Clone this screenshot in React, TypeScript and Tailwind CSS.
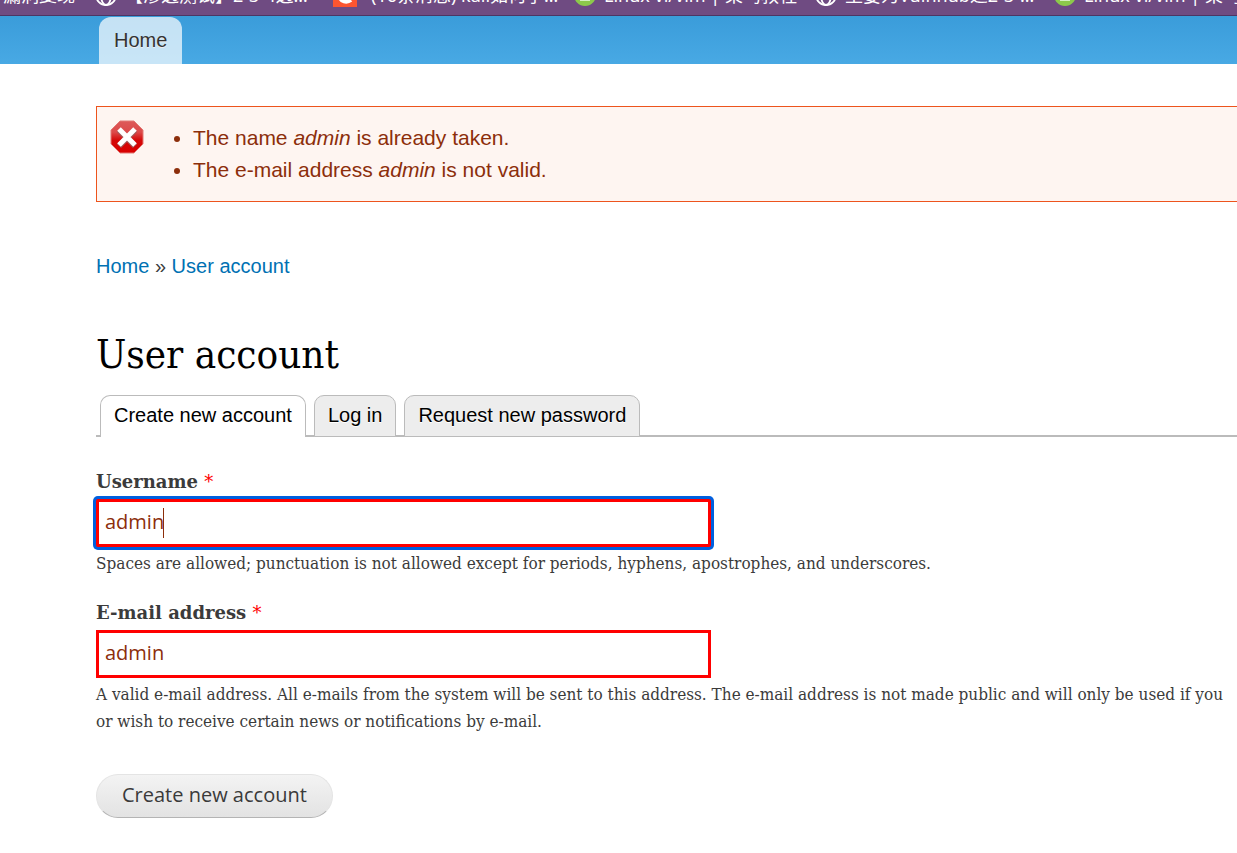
import type { ReactNode } from "react";

const sans = "font-['Liberation_Sans',Arial,sans-serif]";
const serif = "font-['DejaVu_Serif_Condensed','DejaVu_Serif',serif]";
const humanist = "font-['Open_Sans','Noto_Sans',sans-serif]";

function GlobeIcon() {
  return (
    <svg viewBox="0 0 22 22" className="h-[22px] w-[22px] shrink-0" fill="none" stroke="#fff" strokeWidth="1.8" aria-hidden="true">
      <circle cx="11" cy="11" r="10" />
      <ellipse cx="11" cy="11" rx="5" ry="10" />
      <path d="M2 7.500h18M2 14.500h18" />
    </svg>
  );
}

function CsdnIcon() {
  return (
    <svg viewBox="0 0 24 24" className="mr-1.5 h-6 w-6 shrink-0" aria-hidden="true">
      <rect width="24" height="24" fill="#fc5531" />
      <path d="M18 7c-5-3-11-1-11 6 0 6 7 7 11 4" fill="none" stroke="#fff" strokeWidth="4" />
    </svg>
  );
}

function RunoobIcon() {
  return (
    <svg viewBox="0 0 22 22" className="h-[22px] w-[22px] shrink-0" aria-hidden="true">
      <circle cx="11" cy="11" r="11" fill="#8cc84b" />
      <path d="M6 16h10" stroke="#d7efc0" strokeWidth="2" />
    </svg>
  );
}

function Bookmark({ icon, label, width }: { icon?: ReactNode; label: string; width: string }) {
  return (
    <a href="#" className={`flex h-6 shrink-0 items-center gap-2 ${width}`}>
      {icon}
      <span className="whitespace-nowrap">{label}</span>
    </a>
  );
}

function BookmarkBar() {
  return (
    <nav
      aria-label="Bookmarks"
      className="flex h-4 items-end overflow-hidden border-b border-[#4d3564] bg-[#6f4b82] pb-2 pl-[3px] font-['Noto_Sans','Noto_Sans_CJK_SC',sans-serif] text-lg leading-6 text-white"
    >
      <Bookmark label="漏洞复现" width="w-[92px]" />
      <Bookmark icon={<GlobeIcon />} label="【渗透测试】2-3-4透…" width="w-[238px]" />
      <Bookmark icon={<CsdnIcon />} label="(16条消息) kali如何学…" width="w-[241px]" />
      <Bookmark icon={<RunoobIcon />} label="Linux vi/vim | 菜鸟教程" width="w-[241px]" />
      <Bookmark icon={<GlobeIcon />} label="主要为Vulnhub之2-3-…" width="w-[239px]" />
      <Bookmark icon={<RunoobIcon />} label="Linux vi/vim | 菜鸟教程" width="w-[241px]" />
    </nav>
  );
}

function ErrorIcon() {
  return (
    <svg viewBox="0 0 34 34" className="h-[34px] w-[34px] shrink-0" aria-hidden="true">
      <defs>
        <linearGradient id="stop" x1="0" y1="0" x2="0" y2="1">
          <stop offset="0" stopColor="#dd5a5a" />
          <stop offset="0.35" stopColor="#dc4a4a" />
          <stop offset="0.6" stopColor="#d40808" />
          <stop offset="1" stopColor="#d90000" />
        </linearGradient>
      </defs>
      <path d="M10 1h14l9 9v14l-9 9H10l-9-9V10z" fill="url(#stop)" stroke="#e27a76" strokeWidth="1" />
      <path d="M9 10l16 16M25 10L9 26" stroke="#a05858" strokeWidth="6" />
      <path d="M9 9l16 16M25 9L9 25" stroke="#fff" strokeWidth="5" />
    </svg>
  );
}

function Field({ id, label, type, focused, children }: { id: string; label: string; type: string; focused?: boolean; children: ReactNode }) {
  return (
    <div className="flex flex-col items-start">
      <label htmlFor={id} className="pb-0.5 font-['DejaVu_Serif',serif] text-lg leading-[30px] font-bold text-[#3b3b3b]">
        {label} <span className="font-normal text-[#f00]">*</span>
      </label>
      <div className="relative w-full max-w-[615px]">
        <input
          id={id}
          type={type}
          defaultValue="admin"
          className={`block h-12 w-full border-[3px] border-[#f00] bg-white px-1.5 pb-1 text-xl text-[#8c2e0b] outline-none ${humanist} ${focused ? "rounded-xs ring-3 ring-[#0060df]" : ""}`}
        />
        {focused && <span className="absolute top-[9px] left-[67px] h-[30px] w-px bg-[#8c2e0b]" />}
      </div>
      <p className={`pt-[3px] text-[17px] leading-[27px] whitespace-nowrap ${serif}`}>{children}</p>
    </div>
  );
}

const tabs = ["Create new account", "Log in", "Request new password"];

export default function App() {
  return (
    <div className="min-h-screen overflow-hidden bg-white text-[#3b3b3b]">
      <BookmarkBar />
      <header className="flex h-12 items-end bg-linear-to-b from-[#3a9cda] to-[#48a9e4] pl-[99px]">
        <a href="#" className={`h-[47px] rounded-t-xl bg-white/70 px-[15px] text-xl leading-[46px] text-[#333] [text-shadow:0_1px_#eee] ${sans}`}>
          Home
        </a>
      </header>
      <main className="pt-[42px] pl-24">
        <section role="alert" className={`flex h-24 items-start border border-r-0 border-[#ed541d] bg-[#fef5f1] pt-[13px] pl-[13px] text-[#8c2e0b] ${sans}`}>
          <ErrorIcon />
          <ul className="list-disc pt-0.5 pl-[49px] text-[21px] leading-8">
            <li>The name <em>admin</em> is already taken.</li>
            <li>The e-mail address <em>admin</em> is not valid.</li>
          </ul>
        </section>
        <nav aria-label="Breadcrumb" className={`mt-[50px] text-xl leading-7 ${sans}`}>
          <a href="#" className="text-[#0071b3]">Home</a> » <a href="#" className="text-[#0071b3]">User account</a>
        </nav>
        <h1 className={`mt-12 text-[40px] leading-[52px] text-black ${serif}`}>User account</h1>
        <nav aria-label="Account" className={`mt-[15px] flex h-[42px] items-start gap-2 bg-linear-to-t from-[#bbb] from-[2px] to-transparent to-[2px] pl-1 text-xl leading-[39px] text-black ${sans}`}>
          {tabs.map((tab, i) => (
            <a
              key={tab}
              href="#"
              className={`h-[42px] rounded-t-[10px] border border-[#bbb] px-[13px] whitespace-nowrap [text-shadow:0_1px_#fff] ${i === 0 ? "border-b-0 bg-white" : "bg-[#ededed]"}`}
            >
              {tab}
            </a>
          ))}
        </nav>
        <form className="pt-[30px]" onSubmit={(e) => e.preventDefault()}>
          <Field id="username" label="Username" type="text" focused>
            Spaces are allowed; punctuation is not allowed except for periods, hyphens, apostrophes, and underscores.
          </Field>
          <div className="pt-[21px]">
            <Field id="email" label="E-mail address" type="text">
              A valid e-mail address. All e-mails from the system will be sent to this address. The e-mail address is not made public and will only be used if you
              <br />
              or wish to receive certain news or notifications by e-mail.
            </Field>
          </div>
          <button type="submit" className={`mt-[39px] h-11 rounded-full border border-[#e4e4e4] border-b-[#b4b4b4] bg-linear-to-b from-[#f3f3f3] to-[#e3e3e3] px-[25px] pb-0.5 text-xl text-[#3a3a3a] ${humanist}`}>
            Create new account
          </button>
        </form>
      </main>
    </div>
  );
}
